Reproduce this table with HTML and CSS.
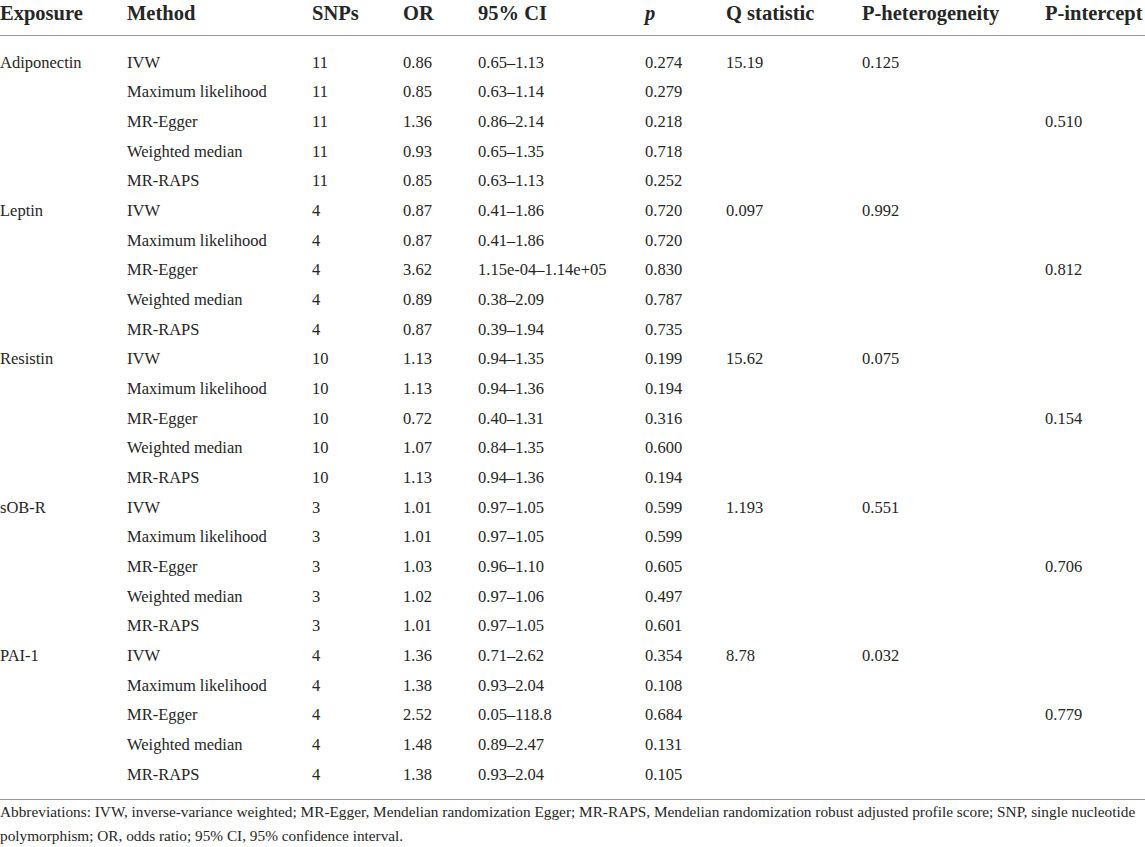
FILE: index.html
```html
<!DOCTYPE html>
<html>
<head>
<meta charset="utf-8">
<link rel="stylesheet" href="styles.css">
</head>
<body>
<div class="wrap">
<table class="mr">
<colgroup>
<col class="c1"><col class="c2"><col class="c3"><col class="c4"><col class="c5"><col class="c6"><col class="c7"><col class="c8"><col class="c9">
</colgroup>
<thead>
<tr><th>Exposure</th><th>Method</th><th>SNPs</th><th>OR</th><th>95% CI</th><th><i>p</i></th><th>Q statistic</th><th>P-heterogeneity</th><th>P-intercept</th></tr>
</thead>
<tbody class="first">
<tr><td>Adiponectin</td><td>IVW</td><td>11</td><td>0.86</td><td>0.65–1.13</td><td>0.274</td><td>15.19</td><td>0.125</td><td></td></tr>
<tr><td></td><td>Maximum likelihood</td><td>11</td><td>0.85</td><td>0.63–1.14</td><td>0.279</td><td></td><td></td><td></td></tr>
<tr><td></td><td>MR-Egger</td><td>11</td><td>1.36</td><td>0.86–2.14</td><td>0.218</td><td></td><td></td><td>0.510</td></tr>
<tr><td></td><td>Weighted median</td><td>11</td><td>0.93</td><td>0.65–1.35</td><td>0.718</td><td></td><td></td><td></td></tr>
<tr><td></td><td>MR-RAPS</td><td>11</td><td>0.85</td><td>0.63–1.13</td><td>0.252</td><td></td><td></td><td></td></tr>
<tr><td>Leptin</td><td>IVW</td><td>4</td><td>0.87</td><td>0.41–1.86</td><td>0.720</td><td>0.097</td><td>0.992</td><td></td></tr>
<tr><td></td><td>Maximum likelihood</td><td>4</td><td>0.87</td><td>0.41–1.86</td><td>0.720</td><td></td><td></td><td></td></tr>
<tr><td></td><td>MR-Egger</td><td>4</td><td>3.62</td><td>1.15e-04–1.14e+05</td><td>0.830</td><td></td><td></td><td>0.812</td></tr>
<tr><td></td><td>Weighted median</td><td>4</td><td>0.89</td><td>0.38–2.09</td><td>0.787</td><td></td><td></td><td></td></tr>
<tr><td></td><td>MR-RAPS</td><td>4</td><td>0.87</td><td>0.39–1.94</td><td>0.735</td><td></td><td></td><td></td></tr>
<tr><td>Resistin</td><td>IVW</td><td>10</td><td>1.13</td><td>0.94–1.35</td><td>0.199</td><td>15.62</td><td>0.075</td><td></td></tr>
<tr><td></td><td>Maximum likelihood</td><td>10</td><td>1.13</td><td>0.94–1.36</td><td>0.194</td><td></td><td></td><td></td></tr>
<tr><td></td><td>MR-Egger</td><td>10</td><td>0.72</td><td>0.40–1.31</td><td>0.316</td><td></td><td></td><td>0.154</td></tr>
<tr><td></td><td>Weighted median</td><td>10</td><td>1.07</td><td>0.84–1.35</td><td>0.600</td><td></td><td></td><td></td></tr>
<tr><td></td><td>MR-RAPS</td><td>10</td><td>1.13</td><td>0.94–1.36</td><td>0.194</td><td></td><td></td><td></td></tr>
<tr><td>sOB-R</td><td>IVW</td><td>3</td><td>1.01</td><td>0.97–1.05</td><td>0.599</td><td>1.193</td><td>0.551</td><td></td></tr>
<tr><td></td><td>Maximum likelihood</td><td>3</td><td>1.01</td><td>0.97–1.05</td><td>0.599</td><td></td><td></td><td></td></tr>
<tr><td></td><td>MR-Egger</td><td>3</td><td>1.03</td><td>0.96–1.10</td><td>0.605</td><td></td><td></td><td>0.706</td></tr>
<tr><td></td><td>Weighted median</td><td>3</td><td>1.02</td><td>0.97–1.06</td><td>0.497</td><td></td><td></td><td></td></tr>
<tr><td></td><td>MR-RAPS</td><td>3</td><td>1.01</td><td>0.97–1.05</td><td>0.601</td><td></td><td></td><td></td></tr>
<tr><td>PAI-1</td><td>IVW</td><td>4</td><td>1.36</td><td>0.71–2.62</td><td>0.354</td><td>8.78</td><td>0.032</td><td></td></tr>
<tr><td></td><td>Maximum likelihood</td><td>4</td><td>1.38</td><td>0.93–2.04</td><td>0.108</td><td></td><td></td><td></td></tr>
<tr><td></td><td>MR-Egger</td><td>4</td><td>2.52</td><td>0.05–118.8</td><td>0.684</td><td></td><td></td><td>0.779</td></tr>
<tr><td></td><td>Weighted median</td><td>4</td><td>1.48</td><td>0.89–2.47</td><td>0.131</td><td></td><td></td><td></td></tr>
<tr class="last"><td></td><td>MR-RAPS</td><td>4</td><td>1.38</td><td>0.93–2.04</td><td>0.105</td><td></td><td></td><td></td></tr>
</tbody>
</table>
<p class="note">Abbreviations: IVW, inverse-variance weighted; MR-Egger, Mendelian randomization Egger; MR-RAPS, Mendelian randomization robust adjusted profile score; SNP, single nucleotide polymorphism; OR, odds ratio; 95% CI, 95% confidence interval.</p>
</div>
</body>
</html>
```

FILE: styles.css
```css
html, body {
  margin: 0;
  padding: 0;
  background: #ffffff;
}
.wrap {
  width: 1145px;
  font-family: "Liberation Serif", "Times New Roman", serif;
  color: #262626;
}
.mr {
  width: 1145px;
  border-collapse: collapse;
  table-layout: fixed;
}
.c1 { width: 127px; }
.c2 { width: 185px; }
.c3 { width: 91px; }
.c4 { width: 75px; }
.c5 { width: 167px; }
.c6 { width: 81px; }
.c7 { width: 136px; }
.c8 { width: 183px; }
.c9 { width: 100px; }
.mr th {
  text-align: left;
  font-weight: bold;
  font-size: 20.5px;
  height: 26px;
  padding: 0 0 9px 0;
  vertical-align: top;
  line-height: 26px;
  border-bottom: 1px solid #9a9a9a;
  white-space: nowrap;
}
.mr td {
  font-size: 16.5px;
  height: 29.67px;
  padding: 0;
  line-height: 20px;
  vertical-align: middle;
  white-space: nowrap;
}
.mr tbody.first tr:first-child td {
  padding-top: 12px;
}
.mr tr.last td {
  padding-bottom: 10px;
  border-bottom: 1px solid #9a9a9a;
}
.note {
  margin: 0;
  font-size: 15.3px;
  line-height: 24px;
}
```
